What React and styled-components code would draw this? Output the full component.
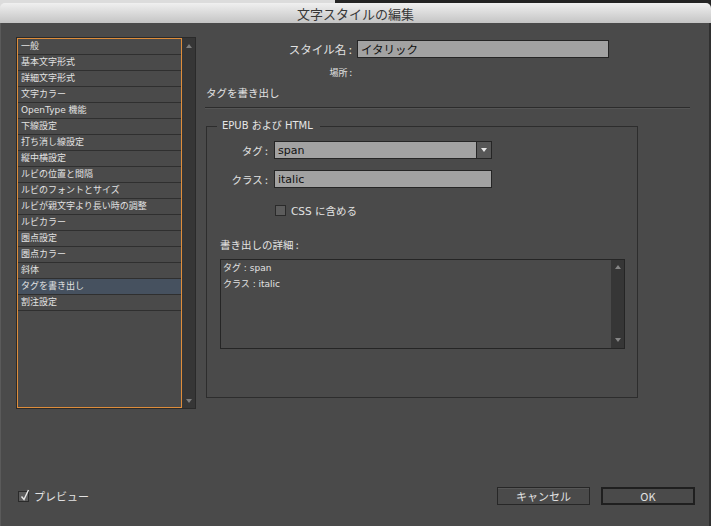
import React from 'react';
import styled, { createGlobalStyle } from 'styled-components';

const GlobalStyle = createGlobalStyle`
  html, body {
    margin: 0;
    padding: 0;
  }
  body {
    width: 711px;
    height: 526px;
    overflow: hidden;
    background: linear-gradient(to right, #dcdcdc 0, #dcdcdc 335px, #242424 335px);
    font-family: "DejaVu Sans", "Noto Sans CJK JP", sans-serif;
  }
`;

const Window = styled.div`
  height: 526px;
  box-sizing: border-box;
  padding-top: 3px;
  display: flex;
  flex-direction: column;
`;

const TitleBar = styled.div`
  height: 20px;
  border-radius: 5px 5px 0 0;
  background: linear-gradient(#f0f0f0, #c4c4c4);
  display: flex;
  align-items: center;
  justify-content: center;
  font-family: "Noto Sans CJK JP", sans-serif;
  font-size: 13px;
  color: #383838;
`;

const Body = styled.div`
  flex: 1;
  background: #4a4a4a;
  box-shadow: inset 1px 0 #5a5a5a, inset -2px 0 #2f2f2f;
  display: flex;
  flex-direction: column;
`;

const Main = styled.div`
  display: flex;
  align-items: flex-start;
  gap: 10px;
  padding: 14px 0 0 16px;
`;

const List = styled.div`
  width: 180px;
  height: 372px;
  box-sizing: border-box;
  border: 1px solid #2a2a2a;
  display: flex;
`;

const Items = styled.div`
  flex: 1;
  border: 1px solid #de8d3b;
  background: #4a4a4a;
  display: flex;
  flex-direction: column;
`;

const Row = styled.div`
  height: 15px;
  line-height: 15px;
  border-bottom: 1px solid #2f2f2f;
  padding-left: 3px;
  font-size: 9px;
  color: #e2e2e2;
  white-space: nowrap;
  background: ${(p) => (p.$selected ? '#46515f' : 'transparent')};
`;

const Track = styled.div`
  width: 13px;
  flex-shrink: 0;
  background: #363636;
  display: flex;
  flex-direction: column;
  align-items: center;
  justify-content: space-between;
  padding: ${(p) => p.$pad || '6px 0'};
  box-sizing: border-box;
`;

const Arrow = styled.div`
  width: 0;
  height: 0;
  border-left: 3.5px solid transparent;
  border-right: 3.5px solid transparent;
  ${(p) =>
    p.$down
      ? `border-top: 4px solid ${p.$color || '#7c7c7c'};`
      : `border-bottom: 4px solid ${p.$color || '#7c7c7c'};`}
`;

const Panel = styled.div`
  width: 484px;
  margin-top: 3px;
  display: flex;
  flex-direction: column;
`;

const FormRow = styled.div`
  display: grid;
  grid-template-columns: 146px 252px;
  column-gap: 5px;
  align-items: center;
  margin-top: ${(p) => p.$mt || 0}px;
  height: ${(p) => p.$h}px;
`;

const Label = styled.div`
  text-align: right;
  font-family: "Noto Sans CJK JP", sans-serif;
  font-size: ${(p) => p.$size || 11}px;
  color: #e2e2e2;
  white-space: nowrap;
`;

const Field = styled.div`
  height: 18px;
  box-sizing: border-box;
  background: #a2a2a2;
  border: 1px solid #252525;
  display: flex;
  align-items: center;
  font-size: ${(p) => p.$size || 11}px;
  color: #111;
  padding-left: 3px;
  white-space: nowrap;
  overflow: hidden;
`;

const SectionTitle = styled.div`
  margin-top: 8px;
  font-family: "Noto Sans CJK JP", sans-serif;
  font-size: 10.5px;
  line-height: 14px;
  color: #e2e2e2;
`;

const Separator = styled.div`
  margin: 7px 0 0 -1px;
  width: 485px;
  height: 1px;
  background: #2c2c2c;
  box-shadow: 0 1px #555;
`;

const Group = styled.fieldset`
  margin: 12px 0 0 0;
  width: 432px;
  height: 278px;
  box-sizing: border-box;
  border: 1px solid #2d2d2d;
  padding: 0 0 0 13px;
  min-width: 0;
`;

const Legend = styled.legend`
  margin-left: -3px;
  padding: 0 7px 0 5px;
  font-size: 10px;
  line-height: 12px;
  color: #e6e6e6;
`;

const FieldGrid = styled.div`
  margin-top: 9px;
  display: grid;
  grid-template-columns: 48px 218px;
  column-gap: 6px;
  row-gap: 11px;
  align-items: center;
`;

const DropButton = styled.div`
  margin-left: auto;
  width: 14px;
  height: 100%;
  background: #575757;
  border-left: 1px solid #252525;
  display: flex;
  align-items: center;
  justify-content: center;
`;

const CheckRow = styled.label`
  display: flex;
  align-items: center;
  gap: ${(p) => p.$gap || 5}px;
  margin: ${(p) => p.$margin || 0};
  font-family: "DejaVu Sans", "Noto Sans CJK JP", sans-serif;
  font-size: 10.5px;
  color: #e2e2e2;
  height: 11px;
`;

const Box = styled.span`
  position: relative;
  width: 11px;
  height: 11px;
  box-sizing: border-box;
  background: #5c5c5c;
  border: 1px solid #2a2a2a;
  flex-shrink: 0;
`;

const Tick = styled.svg`
  position: absolute;
  left: 1px;
  top: -3px;
`;

const DetailLabel = styled.div`
  margin-top: 22px;
  font-family: "Noto Sans CJK JP", sans-serif;
  font-size: 10.5px;
  line-height: 14px;
  color: #e2e2e2;
`;

const TextArea = styled.div`
  margin-top: 7px;
  width: 405px;
  height: 90px;
  box-sizing: border-box;
  border: 1px solid #252525;
  background: #4a4a4a;
  display: flex;
`;

const TextLines = styled.div`
  flex: 1;
  padding: 0 2px;
  font-size: 9px;
  line-height: 16px;
  color: #e2e2e2;
`;

const Footer = styled.div`
  margin-top: auto;
  height: 18px;
  padding: 0 16px 21px 18px;
  display: flex;
  align-items: center;
`;

const Spacer = styled.div`
  flex: 1;
`;

const Button = styled.button`
  width: ${(p) => p.$w}px;
  height: 18px;
  margin-left: ${(p) => p.$ml || 0}px;
  box-sizing: border-box;
  background: #4a4a4a;
  border: ${(p) => (p.$default ? '2px solid #1f1f1f' : '1px solid #272727')};
  box-shadow: ${(p) => (p.$default ? 'none' : 'inset 0 1px #575757')};
  color: #e2e2e2;
  font-family: "Noto Sans CJK JP", sans-serif;
  font-size: 11px;
  padding: 0;
  display: flex;
  align-items: center;
  justify-content: center;
`;

const categories = [
  '一般',
  '基本文字形式',
  '詳細文字形式',
  '文字カラー',
  'OpenType 機能',
  '下線設定',
  '打ち消し線設定',
  '縦中横設定',
  'ルビの位置と間隔',
  'ルビのフォントとサイズ',
  'ルビが親文字より長い時の調整',
  'ルビカラー',
  '圏点設定',
  '圏点カラー',
  '斜体',
  'タグを書き出し',
  '割注設定',
];

export default function App() {
  return (
    <>
      <GlobalStyle />
      <Window>
        <TitleBar>文字スタイルの編集</TitleBar>
        <Body>
          <Main>
            <List>
              <Items>
                {categories.map((c) => (
                  <Row key={c} $selected={c === 'タグを書き出し'}>
                    {c}
                  </Row>
                ))}
              </Items>
              <Track $pad="6px 0 5px">
                <Arrow />
                <Arrow $down />
              </Track>
            </List>

            <Panel>
              <FormRow $h={18}>
                <Label $size={11.5}>スタイル名 :</Label>
                <Field $size={11.5}>イタリック</Field>
              </FormRow>
              <FormRow $mt={8} $h={12}>
                <Label $size={9}>場所 :</Label>
              </FormRow>
              <SectionTitle>タグを書き出し</SectionTitle>
              <Separator />

              <Group>
                <Legend>EPUB および HTML</Legend>
                <FieldGrid>
                  <Label $size={10.5}>タグ :</Label>
                  <Field>
                    span
                    <DropButton>
                      <Arrow $down $color="#e8e8e8" />
                    </DropButton>
                  </Field>
                  <Label $size={10.5}>クラス :</Label>
                  <Field>italic</Field>
                </FieldGrid>
                <CheckRow $margin="17px 0 0 55px">
                  <Box />
                  CSS に含める
                </CheckRow>
                <DetailLabel>書き出しの詳細 :</DetailLabel>
                <TextArea>
                  <TextLines>
                    <div>タグ : span</div>
                    <div>クラス : italic</div>
                  </TextLines>
                  <Track $pad="5px 0 6px">
                    <Arrow $color="#858585" />
                    <Arrow $down $color="#858585" />
                  </Track>
                </TextArea>
              </Group>
            </Panel>
          </Main>

          <Footer>
            <CheckRow $gap={5}>
              <Box>
                <Tick width="10" height="12" viewBox="0 0 10 12">
                  <path d="M1.5 7.5 L4 10.5 L8.5 1" fill="none" stroke="#e8e8e8" strokeWidth="1.4" />
                </Tick>
              </Box>
              <span style={{ fontFamily: '"Noto Sans CJK JP", sans-serif', fontSize: 11 }}>プレビュー</span>
            </CheckRow>
            <Spacer />
            <Button $w={93}>キャンセル</Button>
            <Button $w={94} $ml={11} $default>
              OK
            </Button>
          </Footer>
        </Body>
      </Window>
    </>
  );
}
